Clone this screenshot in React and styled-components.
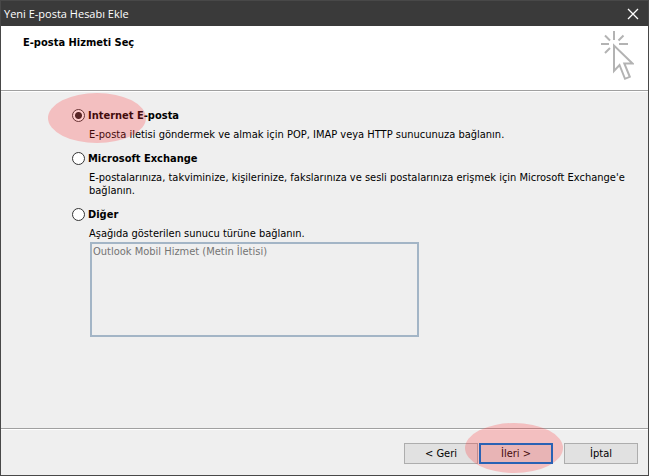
import { useState } from 'react'
import styled, { createGlobalStyle } from 'styled-components'

const GlobalStyle = createGlobalStyle`
  * {
    box-sizing: border-box;
  }

  body {
    margin: 0;
    font: 11px/13px 'DejaVu Sans Condensed', 'DejaVu Sans', sans-serif;
    color: #000;
  }

  button, select, option {
    font: inherit;
  }
`

const Dialog = styled.div`
  display: flex;
  flex-direction: column;
  min-height: 100vh;
  border: 1px solid #484848;
  background-color: #efefef;
`

const TitleBar = styled.div`
  display: flex;
  justify-content: space-between;
  align-items: center;
  height: 25px;
  padding: 0 9px 0 3px;
  background-color: #3a3a3a;
  color: #fff;
  font: 11px/17px 'Open Sans', 'Noto Sans', sans-serif;
`

const CloseButton = styled.button`
  display: flex;
  padding: 0;
  border: none;
  background: none;
  color: #fff;
`

const Header = styled.header`
  display: flex;
  justify-content: space-between;
  align-items: flex-start;
  height: 65px;
  padding: 4px 14px 0 22px;
  border-bottom: 1px solid #a0a0a0;
  background-color: #fff;
`

const Heading = styled.h1`
  margin: 6px 0 0;
  font-size: 11px;
  line-height: 13px;
`

const Content = styled.main`
  flex: 1;
  padding: 17px 10px 16px 71px;
  border-top: 1px solid #fff;
`

const Option = styled.div`
  margin-bottom: 11px;
`

const OptionLabel = styled.label`
  display: flex;
  align-items: center;
  gap: 3px;
  height: 13px;
  font-weight: bold;
`

const Radio = styled.input`
  appearance: none;
  flex: none;
  width: 13px;
  height: 13px;
  margin: 0;
  border: 1px solid #333;
  border-radius: 50%;
  background-color: #fff;

  &:checked {
    background-image: radial-gradient(circle, #222 0 3px, transparent 4px);
  }
`

const Description = styled.p`
  display: block;
  margin: 6px 0 0;
  padding-left: 17px;
`

const ServerList = styled.select`
  display: block;
  width: 329px;
  max-width: 100%;
  height: 95px;
  margin: 2px 0 0 18px;
  padding: 0;
  border: 2px solid #a3b5c6;
  border-radius: 0;
  background-color: #efefef;
  opacity: 1;
  overflow: hidden;

  & option {
    min-height: 13px;
    padding: 1px 1px 0;
    color: #747474;
  }
`

const Footer = styled.footer`
  display: flex;
  justify-content: flex-end;
  align-items: flex-start;
  gap: 1px;
  height: 47px;
  padding: 14px 10px 0;
  border-top: 1px solid #a0a0a0;
  box-shadow: inset 0 1px #fff;
`

const Button = styled.button`
  display: block;
  width: 74px;
  height: 21px;
  margin-left: ${props => props.$apart ? '10px' : '0'};
  padding: 0;
  border: 1px solid #adadad;
  background-color: #e1e1e1;
  color: #000;
`

// the default button's frame is drawn over the highlight
const PrimaryButton = styled(Button)`
  &::after {
    content: '';
    position: absolute;
    z-index: 1;
    inset: 0;
    border: 2px solid #2a62b4;
  }
`

const Highlighted = styled.div`
  position: relative;

  &::after {
    content: '';
    position: absolute;
    top: ${props => props.$top};
    left: ${props => props.$left};
    width: 98px;
    height: 50px;
    border-radius: 50%;
    background-color: rgba(255, 46, 52, 0.25);
    pointer-events: none;
  }
`

const CursorIcon = () => (
  <svg width='34' height='51' viewBox='0 0 34 51' fill='none' stroke='#b3b3b3' strokeWidth='2' aria-hidden='true'>
    <path d='M14 1v9M1 14h8M19 14h9M5 5.5l5 5M23.500 5.500l-5 5M5 23l5-5' />
    <path d='M14 15.500v25.500l5.500-6 5.500 13.800 4.800-2-5.500-13.300h8.200z' />
  </svg>
)

const App = () => {
  const [service, setService] = useState('internet')

  const radio = (value) => (
    <Radio
      type='radio'
      name='service'
      value={value}
      checked={service === value}
      onChange={() => setService(value)}
    />
  )

  return (
    <>
      <GlobalStyle />
      <Dialog role='dialog' aria-label='Yeni E-posta Hesabı Ekle' lang='tr'>
        <TitleBar>
          <span>Yeni E-posta Hesabı Ekle</span>
          <CloseButton aria-label='Kapat'>
            <svg width='12' height='12' viewBox='0 0 12 12' stroke='currentColor' strokeWidth='1.3'>
              <path d='M1 1l10 10M11 1L1 11' />
            </svg>
          </CloseButton>
        </TitleBar>
        <Header>
          <Heading>E-posta Hizmeti Seç</Heading>
          <CursorIcon />
        </Header>
        <Content>
          <Option>
            <Highlighted $top='-16px' $left='-24px'>
              <OptionLabel>{radio('internet')}Internet E-posta</OptionLabel>
              <Description>
                E-posta iletisi göndermek ve almak için POP, IMAP veya HTTP sunucunuza bağlanın.
              </Description>
            </Highlighted>
          </Option>
          <Option>
            <OptionLabel>{radio('exchange')}Microsoft Exchange</OptionLabel>
            <Description>
              E-postalarınıza, takviminize, kişilerinize, fakslarınıza ve sesli postalarınıza erişmek için Microsoft Exchange'e bağlanın.
            </Description>
          </Option>
          <Option>
            <OptionLabel>{radio('other')}Diğer</OptionLabel>
            <Description as='label' htmlFor='server'>
              Aşağıda gösterilen sunucu türüne bağlanın.
            </Description>
            <ServerList id='server' size={2} disabled={service !== 'other'}>
              <option>Outlook Mobil Hizmet (Metin İletisi)</option>
            </ServerList>
          </Option>
        </Content>
        <Footer>
          <Button>&lt; Geri</Button>
          <Highlighted $top='-20px' $left='-14px'>
            <PrimaryButton>İleri &gt;</PrimaryButton>
          </Highlighted>
          <Button $apart>İptal</Button>
        </Footer>
      </Dialog>
    </>
  )
}

export default App
